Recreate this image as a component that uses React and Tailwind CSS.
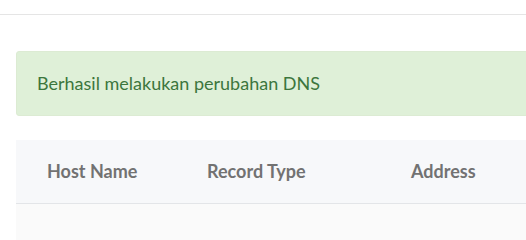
export default function App() {
    return (
        <div className="h-[240px] w-[526px] overflow-hidden bg-white font-['Lato','Noto_Sans',sans-serif]">
            <div className="h-[15px] border-b border-[#e5e5e5]" />
            <div className="w-[800px] pl-4 pt-9">
                <div className="flex h-[65px] items-center rounded-[3px] border border-[#dcebd3] bg-[#dff0d8] pl-5 text-[18px] text-[#3c763d]">
                    Berhasil melakukan perubahan DNS
                </div>

                <div className="mt-6">
                    <div className="grid h-[64px] grid-cols-[160px_204px_1fr] items-center border-b border-[#e3e5e8] bg-[#f7f8fa] text-[18px] font-bold text-[#727272]">
                        <div className="pl-[31px]">Host Name</div>
                        <div className="pl-[31px]">Record Type</div>
                        <div className="pl-[31px]">Address</div>
                    </div>
                    <div className="h-[60px] bg-[#fafafa]" />
                </div>
            </div>
        </div>
    );
}
